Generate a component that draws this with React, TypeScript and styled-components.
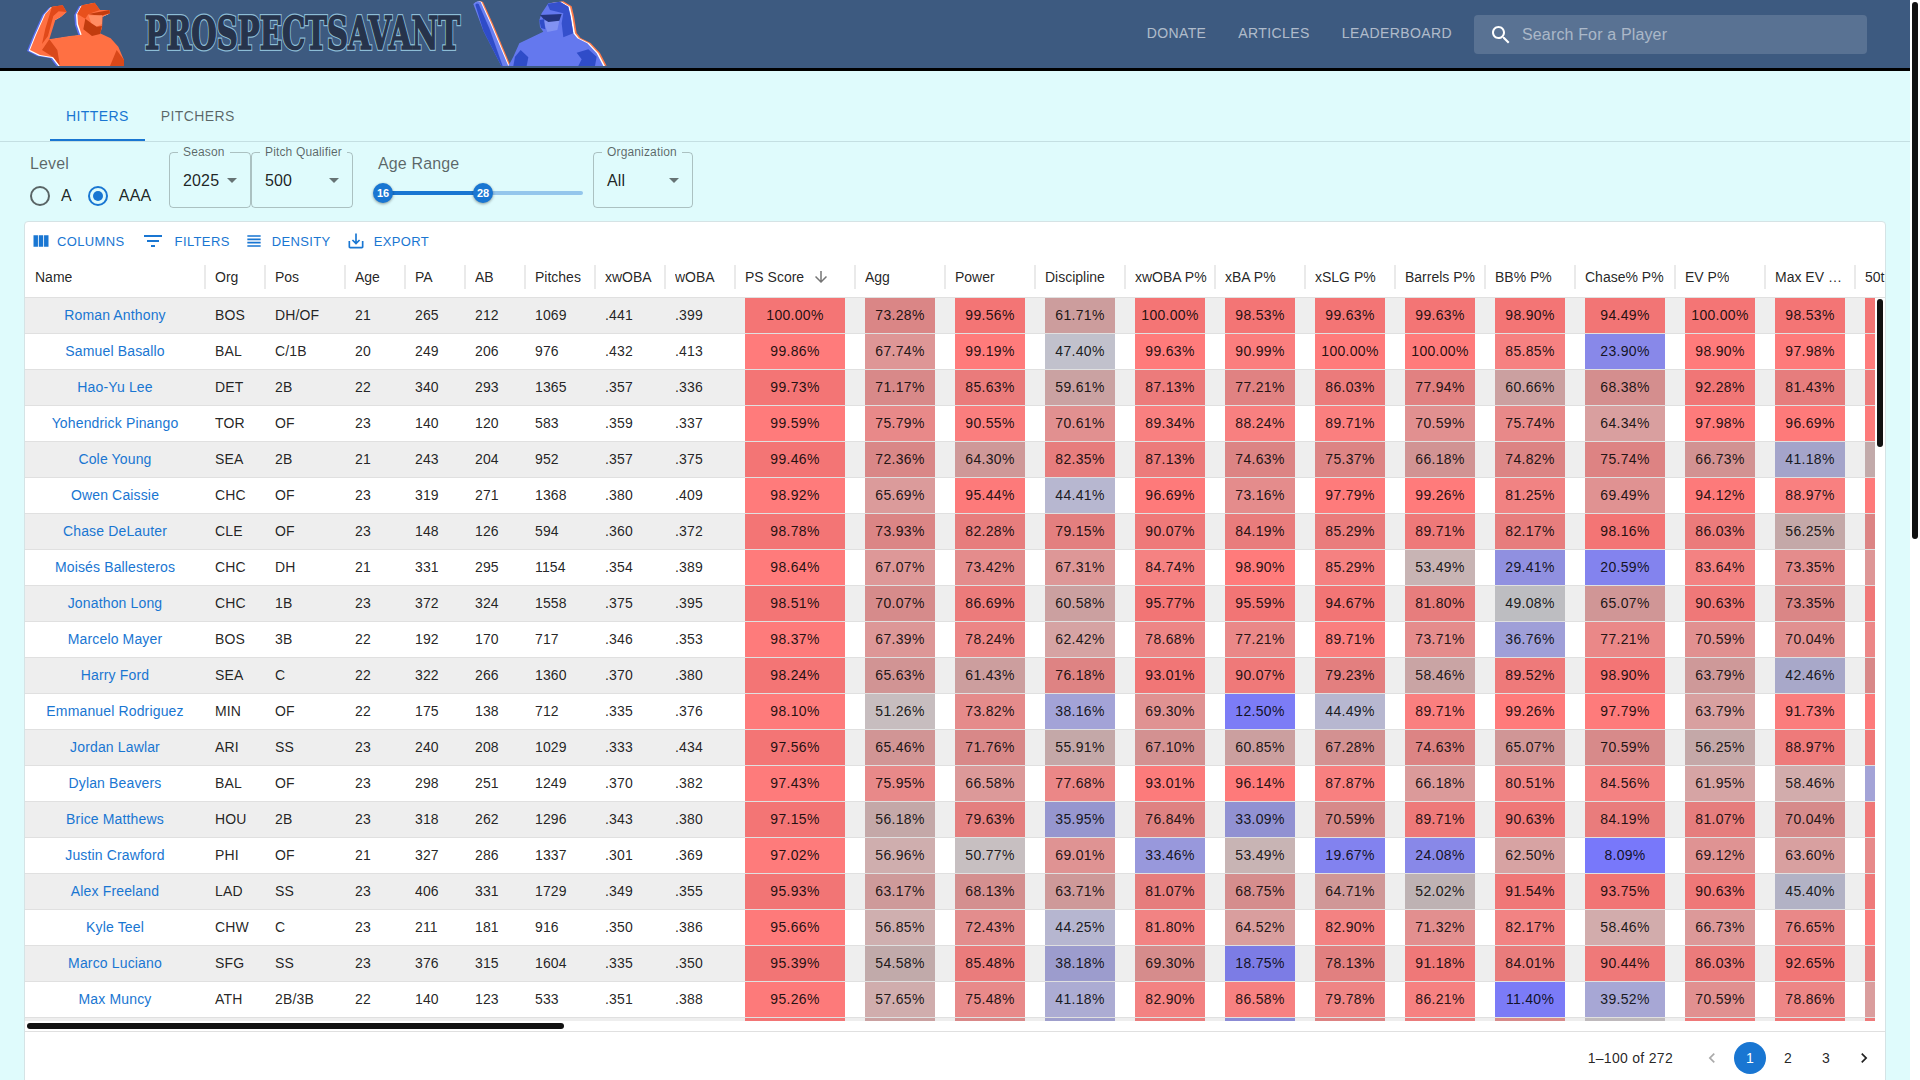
import React from 'react'
import styled, { createGlobalStyle } from 'styled-components'

const GlobalStyle = createGlobalStyle`
  body {
    margin: 0;
    background: #dffbfc;
    font-family: "Liberation Sans", Arial, sans-serif;
    color: rgba(0, 0, 0, 0.87);
  }
`

const Shell = styled.div`
  display: flex;
  height: 100vh;
  overflow: hidden;
`

const Main = styled.main`
  flex: 1;
  min-width: 0;
`

const PageScrollTrack = styled.aside`
  flex: none;
  width: 10px;
  background: #fff;
`

const ScrollThumb = styled.div<{ $w: number; $h: number }>`
  width: ${(p) => p.$w}px;
  height: ${(p) => p.$h}px;
  margin: 2px;
  background: #111;
  border-radius: 3px;
`

const TopBar = styled.header`
  height: 68px;
  background: #3d5a80;
  border-bottom: 3px solid #000;
  display: flex;
  justify-content: space-between;
  padding: 0 43px 0 20px;
`

const Logo = styled.svg`
  width: 600px;
  height: 66px;
  flex: none;
`

const LogoText = styled.text<{ $halo?: boolean }>`
  font-family: "DejaVu Serif", serif;
  font-weight: 700;
  font-size: 45px;
  fill: #26334b;
  stroke: ${(p) => (p.$halo ? '#8dbdd6' : '#26334b')};
  stroke-width: ${(p) => (p.$halo ? 4 : 1.6)}px;
  stroke-linejoin: miter;
`

const Nav = styled.nav`
  display: flex;
  align-items: center;
`

const NavLink = styled.a`
  font-size: 14px;
  letter-spacing: 0.4px;
  text-transform: uppercase;
  color: rgba(255, 255, 255, 0.6);
  margin-right: 32px;
  padding-bottom: 2px;

  &:last-of-type {
    margin-right: 22px;
  }
`

const Search = styled.div`
  width: 393px;
  height: 39px;
  margin-top: 1px;
  border-radius: 4px;
  background: rgba(255, 255, 255, 0.15);
  display: flex;
  align-items: center;
  padding-left: 15px;
  box-sizing: border-box;
  gap: 7px;
  color: #fff;
`

const SearchInput = styled.input`
  flex: 1;
  border: 0;
  outline: 0;
  background: none;
  font: 16px "Liberation Sans", Arial, sans-serif;
  letter-spacing: 0.15px;
  color: #fff;

  &::placeholder {
    color: rgba(255, 255, 255, 0.5);
    opacity: 1;
  }
`

const Tabs = styled.div`
  margin-top: 22px;
  height: 48px;
  padding-left: 50px;
  display: flex;
  border-bottom: 1px solid #c4dfe2;
`

const Tab = styled.div<{ $active?: boolean }>`
  padding: 0 16px 2px;
  display: flex;
  align-items: center;
  font-size: 14px;
  letter-spacing: 0.4px;
  text-transform: uppercase;
  color: ${(p) => (p.$active ? '#1976d2' : 'rgba(0, 0, 0, 0.6)')};
  box-shadow: ${(p) => (p.$active ? 'inset 0 -2px 0 #1976d2' : 'none')};
`

const FilterBar = styled.div`
  display: flex;
  padding: 10px 0 0 30px;
  height: 56px;
  margin-bottom: 13px;
`

const FilterGroup = styled.div<{ $w: number }>`
  width: ${(p) => p.$w}px;
  flex: none;
`

const FilterLabel = styled.div`
  font-size: 16px;
  line-height: 24px;
  letter-spacing: 0.15px;
  color: rgba(0, 0, 0, 0.6);
`

const RadioRow = styled.div`
  display: flex;
  align-items: center;
  margin-top: 10px;
  font-size: 16px;
  letter-spacing: 0.15px;
`

const RadioRing = styled.span<{ $on?: boolean }>`
  width: 20px;
  height: 20px;
  box-sizing: border-box;
  border-radius: 50%;
  border: 2px solid ${(p) => (p.$on ? '#1976d2' : 'rgba(0, 0, 0, 0.6)')};
  display: flex;
  align-items: center;
  justify-content: center;
  margin-right: 11px;

  &::after {
    content: '';
    width: 10px;
    height: 10px;
    border-radius: 50%;
    background: ${(p) => (p.$on ? '#1976d2' : 'transparent')};
  }
`

const RadioText = styled.span`
  margin-right: 16px;
`

const SelectBox = styled.div<{ $w: number }>`
  position: relative;
  width: ${(p) => p.$w}px;
  height: 56px;
  box-sizing: border-box;
  flex: none;
  border: 1px solid rgba(0, 0, 0, 0.23);
  border-radius: 4px;
  padding: 2px 0 0 13px;
  display: flex;
  align-items: center;
  font-size: 16px;
  letter-spacing: 0.15px;
`

const SelectLegend = styled.span`
  position: absolute;
  top: -8px;
  left: 8px;
  padding: 0 5px;
  background: #dffbfc;
  font-size: 12px;
  line-height: 14px;
  letter-spacing: 0.15px;
  color: rgba(0, 0, 0, 0.6);
`

const SelectArrow = styled.svg`
  position: absolute;
  right: 6px;
  top: 15px;
  width: 24px;
  height: 24px;
  fill: rgba(0, 0, 0, 0.54);
`

const AgeGroup = styled.div`
  width: 215px;
  flex: none;
  margin-left: 25px;
`

const Slider = styled.div`
  position: relative;
  width: 200px;
  height: 4px;
  margin: 15px 0 0 5px;
  border-radius: 2px;
  background: #94c6ec;
`

const SliderTrack = styled.div<{ $w: number }>`
  height: 100%;
  width: ${(p) => p.$w}px;
  background: #1976d2;
  border-radius: 2px;
`

const SliderThumb = styled.span<{ $x: number }>`
  position: absolute;
  left: ${(p) => p.$x - 10}px;
  top: -8px;
  width: 20px;
  height: 20px;
  border-radius: 50%;
  background: #1976d2;
  color: #fff;
  font-size: 11px;
  font-weight: 700;
  display: flex;
  align-items: center;
  justify-content: center;
  box-shadow: 0 1px 3px rgba(0, 0, 0, 0.4);
`

const Grid = styled.section`
  margin-left: 24px;
  width: 1862px;
  box-sizing: border-box;
  background: #fff;
  border: 1px solid #d5e3e5;
  border-radius: 4px;
`

const Toolbar = styled.div`
  height: 40px;
  box-sizing: border-box;
  padding: 0 0 2px 6px;
  display: flex;
  align-items: center;
  gap: 14px;
`

const ToolButton = styled.button<{ $gap: number; $lead: number }>`
  border: 0;
  padding: 0;
  margin-left: ${(p) => p.$lead}px;
  background: none;
  display: flex;
  align-items: center;
  gap: ${(p) => p.$gap}px;
  font: 13px "Liberation Sans", Arial, sans-serif;
  letter-spacing: 0.37px;
  text-transform: uppercase;
  color: #1976d2;
`

const ToolIcon = styled.svg<{ $size: number }>`
  width: ${(p) => p.$size}px;
  height: ${(p) => p.$size}px;
  fill: #1976d2;
`

const HeaderRow = styled.div`
  height: 35px;
  display: flex;
  overflow: hidden;
  border-bottom: 1px solid #e0e0e0;
`

const HeaderCell = styled.div<{ $w: number }>`
  position: relative;
  flex: none;
  width: ${(p) => p.$w}px;
  box-sizing: border-box;
  padding: 0 6px 6px 10px;
  display: flex;
  align-items: center;
  font-size: 14px;

  &::after {
    content: '';
    position: absolute;
    right: -1px;
    top: 3px;
    bottom: 8px;
    width: 2px;
    background: #eaeaea;
  }
`

const HeaderTitle = styled.span`
  overflow: hidden;
  white-space: nowrap;
  text-overflow: ellipsis;
`

const SortIcon = styled.svg`
  width: 18px;
  height: 18px;
  margin-left: 8px;
  flex: none;
  fill: rgba(0, 0, 0, 0.54);
`

const BodyArea = styled.div`
  display: flex;
  height: 723px;
`

const RowViewport = styled.div`
  width: 1850px;
  flex: none;
  overflow: hidden;
`

const VerticalTrack = styled.div`
  flex: 1;
  margin-top: -1px;
`

const HorizontalTrack = styled.div`
  display: flex;
  height: 10px;
`

const Row = styled.div<{ $striped: boolean }>`
  height: 36px;
  box-sizing: border-box;
  display: flex;
  background: ${(p) => (p.$striped ? '#eeeeee' : '#ffffff')};
  border-bottom: 1px solid #e0e0e0;
`

const Cell = styled.div<{ $w: number }>`
  flex: none;
  width: ${(p) => p.$w}px;
  box-sizing: border-box;
  padding: 0 10px;
  display: flex;
  align-items: center;
  font-size: 14px;
  letter-spacing: 0.15px;
`

const TextCell = styled(Cell)`
  padding-bottom: 1px;
`

const NameCell = styled(TextCell)`
  justify-content: center;
  color: #1976d2;
`

const Fill = styled.div`
  width: 100%;
  height: 100%;
  box-sizing: border-box;
  padding-bottom: 1px;
  display: flex;
  align-items: center;
  justify-content: center;
  letter-spacing: 0.3px;
`

const Footer = styled.div`
  height: 52px;
  border-top: 1px solid #e0e0e0;
  display: flex;
  align-items: center;
  justify-content: flex-end;
  padding-right: 5px;
  font-size: 14px;
  letter-spacing: 0.15px;
`

const PageCount = styled.span`
  margin-right: 17px;
  letter-spacing: 0.3px;
`

const PageButton = styled.span<{ $active?: boolean; $disabled?: boolean }>`
  width: 32px;
  height: 32px;
  margin-left: 6px;
  border-radius: 50%;
  display: flex;
  align-items: center;
  justify-content: center;
  background: ${(p) => (p.$active ? '#1976d2' : 'transparent')};
  color: ${(p) => (p.$active ? '#fff' : 'rgba(0, 0, 0, 0.87)')};
  opacity: ${(p) => (p.$disabled ? 0.38 : 1)};
`

const PageIcon = styled.svg`
  width: 20px;
  height: 20px;
  fill: currentColor;
`

const ICONS = {
  columns: 'M14.67 5v14H9.33V5h5.34zm1 14H21V5h-5.33v14zm-7.34 0V5H3v14h5.33z',
  filter: 'M10 18h4v-2h-4v2zM3 6v2h18V6H3zm3 7h12v-2H6v2z',
  density: 'M4 15h16v-2H4v2zm0 4h16v-2H4v2zm0-8h16V9H4v2zm0-6v2h16V5H4z',
  save: 'M19 12v7H5v-7H3v7c0 1.1.9 2 2 2h14c1.1 0 2-.9 2-2v-7h-2zm-6 .67l2.59-2.58L17 11.5l-5 5-5-5 1.41-1.41L11 12.67V3h2z',
  search:
    'M15.5 14h-.79l-.28-.27C15.41 12.59 16 11.11 16 9.5 16 5.91 13.09 3 9.5 3S3 5.91 3 9.5 5.91 16 9.5 16c1.61 0 3.09-.59 4.23-1.57l.27.28v.79l5 4.99L20.49 19l-4.99-5zm-6 0C7.01 14 5 11.99 5 9.5S7.01 5 9.5 5 14 7.01 14 9.5 11.99 14 9.5 14z',
  down: 'M20 12l-1.41-1.41L13 16.17V4h-2v12.17l-5.58-5.59L4 12l8 8 8-8z',
  drop: 'M7 10l5 5 5-5z',
  prev: 'M15.41 7.41 14 6l-6 6 6 6 1.41-1.41L10.83 12z',
  next: 'M10 6 8.59 7.41 13.17 12l-4.58 4.59L10 18l6-6z',
}

const INFO_COLUMNS: [string, number][] = [
  ['Name', 180],
  ['Org', 60],
  ['Pos', 80],
  ['Age', 60],
  ['PA', 60],
  ['AB', 60],
  ['Pitches', 70],
  ['xwOBA', 70],
  ['wOBA', 70],
]

const PCT_COLUMNS: [string, number][] = [
  ['PS Score', 120],
  ['Agg', 90],
  ['Power', 90],
  ['Discipline', 90],
  ['xwOBA P%', 90],
  ['xBA P%', 90],
  ['xSLG P%', 90],
  ['Barrels P%', 90],
  ['BB% P%', 90],
  ['Chase% P%', 100],
  ['EV P%', 90],
  ['Max EV P%', 90],
  ['50th EV P%', 110],
]

const ROWS: (string | number)[][] = [
  ['Roman Anthony', 'BOS', 'DH/OF', 21, 265, 212, 1069, '.441', '.399', 100.0, 73.28, 99.56, 61.71, 100.0, 98.53, 99.63, 99.63, 98.9, 94.49, 100.0, 98.53, 98],
  ['Samuel Basallo', 'BAL', 'C/1B', 20, 249, 206, 976, '.432', '.413', 99.86, 67.74, 99.19, 47.4, 99.63, 90.99, 100.0, 100.0, 85.85, 23.9, 98.9, 97.98, 97],
  ['Hao-Yu Lee', 'DET', '2B', 22, 340, 293, 1365, '.357', '.336', 99.73, 71.17, 85.63, 59.61, 87.13, 77.21, 86.03, 77.94, 60.66, 68.38, 92.28, 81.43, 88],
  ['Yohendrick Pinango', 'TOR', 'OF', 23, 140, 120, 583, '.359', '.337', 99.59, 75.79, 90.55, 70.61, 89.34, 88.24, 89.71, 70.59, 75.74, 64.34, 97.98, 96.69, 95],
  ['Cole Young', 'SEA', '2B', 21, 243, 204, 952, '.357', '.375', 99.46, 72.36, 64.3, 82.35, 87.13, 74.63, 75.37, 66.18, 74.82, 75.74, 66.73, 41.18, 55],
  ['Owen Caissie', 'CHC', 'OF', 23, 319, 271, 1368, '.380', '.409', 98.92, 65.69, 95.44, 44.41, 96.69, 73.16, 97.79, 99.26, 81.25, 69.49, 94.12, 88.97, 96],
  ['Chase DeLauter', 'CLE', 'OF', 23, 148, 126, 594, '.360', '.372', 98.78, 73.93, 82.28, 79.15, 90.07, 84.19, 85.29, 89.71, 82.17, 98.16, 86.03, 56.25, 75],
  ['Moisés Ballesteros', 'CHC', 'DH', 21, 331, 295, 1154, '.354', '.389', 98.64, 67.07, 73.42, 67.31, 84.74, 98.9, 85.29, 53.49, 29.41, 20.59, 83.64, 73.35, 68],
  ['Jonathon Long', 'CHC', '1B', 23, 372, 324, 1558, '.375', '.395', 98.51, 70.07, 86.69, 60.58, 95.77, 95.59, 94.67, 81.8, 49.08, 65.07, 90.63, 73.35, 92],
  ['Marcelo Mayer', 'BOS', '3B', 22, 192, 170, 717, '.346', '.353', 98.37, 67.39, 78.24, 62.42, 78.68, 77.21, 89.71, 73.71, 36.76, 77.21, 70.59, 70.04, 78],
  ['Harry Ford', 'SEA', 'C', 22, 322, 266, 1360, '.370', '.380', 98.24, 65.63, 61.43, 76.18, 93.01, 90.07, 79.23, 58.46, 89.52, 98.9, 63.79, 42.46, 72],
  ['Emmanuel Rodriguez', 'MIN', 'OF', 22, 175, 138, 712, '.335', '.376', 98.1, 51.26, 73.82, 38.16, 69.3, 12.5, 44.49, 89.71, 99.26, 97.79, 63.79, 91.73, 95],
  ['Jordan Lawlar', 'ARI', 'SS', 23, 240, 208, 1029, '.333', '.434', 97.56, 65.46, 71.76, 55.91, 67.1, 60.85, 67.28, 74.63, 65.07, 70.59, 56.25, 88.97, 92],
  ['Dylan Beavers', 'BAL', 'OF', 23, 298, 251, 1249, '.370', '.382', 97.43, 75.95, 66.58, 77.68, 93.01, 96.14, 87.87, 66.18, 80.51, 84.56, 61.95, 58.46, 38],
  ['Brice Matthews', 'HOU', '2B', 23, 318, 262, 1296, '.343', '.380', 97.15, 56.18, 79.63, 35.95, 76.84, 33.09, 70.59, 89.71, 90.63, 84.19, 81.07, 70.04, 92],
  ['Justin Crawford', 'PHI', 'OF', 21, 327, 286, 1337, '.301', '.369', 97.02, 56.96, 50.77, 69.01, 33.46, 53.49, 19.67, 24.08, 62.5, 8.09, 69.12, 63.6, 75],
  ['Alex Freeland', 'LAD', 'SS', 23, 406, 331, 1729, '.349', '.355', 95.93, 63.17, 68.13, 63.71, 81.07, 68.75, 64.71, 52.02, 91.54, 93.75, 90.63, 45.4, 90],
  ['Kyle Teel', 'CHW', 'C', 23, 211, 181, 916, '.350', '.386', 95.66, 56.85, 72.43, 44.25, 81.8, 64.52, 82.9, 71.32, 82.17, 58.46, 66.73, 76.65, 92],
  ['Marco Luciano', 'SFG', 'SS', 23, 376, 315, 1604, '.335', '.350', 95.39, 54.58, 85.48, 38.18, 69.3, 18.75, 78.13, 91.18, 84.01, 90.44, 86.03, 92.65, 85],
  ['Max Muncy', 'ATH', '2B/3B', 22, 140, 123, 533, '.351', '.388', 95.26, 57.65, 75.48, 41.18, 82.9, 86.58, 79.78, 86.21, 11.4, 39.52, 70.59, 78.86, 65],
  ['', '', '', '', '', '', '', '', '', 95.12, 60.2, 72.1, 39.3, 85.2, 30.4, 75.5, 85.1, 70.3, 50.0, 90.2, 92.1, 90],
]

// percentile -> [r, g, b], blue at the bottom of the scale and red at the top
const SCALE: [number, number, number, number][] = [
  [8, 120, 120, 250],
  [20.59, 131, 131, 238],
  [29.41, 144, 144, 224],
  [36.76, 159, 159, 216],
  [42.46, 176, 176, 210],
  [49, 198, 198, 202],
  [53.49, 200, 180, 180],
  [58.46, 210, 172, 172],
  [63.79, 216, 160, 160],
  [69.49, 224, 146, 146],
  [73.35, 228, 140, 140],
  [81.25, 241, 131, 131],
  [88.97, 249, 128, 128],
  [94, 253, 122, 122],
  [100, 255, 123, 123],
]

function pctColor(pct: number, striped: boolean) {
  let i = 0
  while (i < SCALE.length - 2 && pct > SCALE[i + 1][0]) i++
  const a = SCALE[i]
  const b = SCALE[i + 1]
  const t = Math.min(1, Math.max(0, (pct - a[0]) / (b[0] - a[0])))
  const shade = striped ? 0.955 : 1
  const ch = (n: number) => Math.round((a[n] + (b[n] - a[n]) * t) * shade)
  return `rgb(${ch(1)}, ${ch(2)}, ${ch(3)})`
}

function Pitcher() {
  const body =
    'M30 150 L48 105 L76 42 L96 20 L128 16 L140 36 L124 50 L106 60 L88 118 L150 108 L185 104 L174 72 L172 42 L186 16 L224 8 L240 30 L268 30 L270 40 L248 50 L246 85 L240 100 L272 115 L295 140 L312 180 L312 198 L120 198 L100 172 L60 165 Z'
  return (
    <g transform="scale(0.3333)">
      <path d={body} fill="#5a6ff0" transform="translate(-9 3)" />
      <path d={body} fill="#ffffff" transform="translate(-4 2)" />
      <path d={body} fill="#ff7043" />
      <path d="M172 42 L186 16 L224 8 L240 30 L205 42 L196 56 Z" fill="#e8501c" />
      <path d="M205 42 L268 30 L270 40 L240 48 Z" fill="#c23c0e" />
      <path d="M205 46 L246 46 L246 72 L230 80 L214 70 Z" fill="#ff8d63" />
      <path d="M196 56 L214 70 L230 80 L246 78 L240 102 L216 108 L190 88 Z" fill="#c23c0e" />
      <path d="M96 20 L128 16 L140 36 L116 34 L100 48 L84 108 L66 132 L76 86 Z" fill="#e0491a" />
      <path d="M88 118 L112 150 L120 198 L100 172 L66 150 Z" fill="#d9481a" />
      <path d="M270 198 L290 150 L312 180 L312 198 Z" fill="#d9481a" />
    </g>
  )
}

function Batter() {
  const bat = 'M40 12 Q50 0 62 6 L92 72 L145 198 L124 198 L70 92 Z'
  const body =
    'M178 130 L250 95 L240 82 L238 60 L245 40 L265 10 L300 5 L325 20 L332 50 L340 100 L352 115 L382 130 L410 160 L430 198 L145 198 L160 170 Z'
  return (
    <g transform="translate(440 0) scale(0.3333)">
      <path d={bat} fill="#ff7a4a" transform="translate(7 0)" />
      <path d={bat} fill="#ffffff" transform="translate(3 0)" />
      <path d={bat} fill="#6a7ff0" />
      <path d="M46 14 Q50 8 56 12 L88 85 L128 198 L124 198 L70 92 Z" fill="#2f4cc8" />
      <path d={body} fill="#ff7a4a" transform="translate(10 -1)" />
      <path d={body} fill="#ffffff" transform="translate(5 0)" />
      <path d={body} fill="#6478ee" />
      <path d="M262 12 L300 5 L325 20 L332 50 L340 100 L310 112 L305 70 L310 40 L270 30 Z" fill="#3550cc" />
      <path d="M250 62 L298 62 L292 90 L262 96 Z" fill="#8192f3" />
      <path d="M240 45 L305 42 L298 62 L265 66 L250 56 Z" fill="#24357f" />
      <path d="M238 60 L252 58 L256 88 L243 84 Z" fill="#2f4cc8" />
      <path d="M165 170 L182 150 L205 172 L200 198 L160 198 Z" fill="#2f4cc8" />
      <path d="M350 158 L385 148 L410 170 L405 198 L355 198 L365 178 Z" fill="#2f4cc8" />
    </g>
  )
}

function Select({ label, value, width }: { label: string; value: string; width: number }) {
  return (
    <SelectBox $w={width}>
      <SelectLegend>{label}</SelectLegend>
      {value}
      <SelectArrow viewBox="0 0 24 24">
        <path d={ICONS.drop} />
      </SelectArrow>
    </SelectBox>
  )
}

function ToolbarItem(props: { path: string; size: number; label: string; gap: number; lead: number }) {
  return (
    <ToolButton $gap={props.gap} $lead={props.lead}>
      <ToolIcon $size={props.size} viewBox="0 0 24 24">
        <path d={props.path} />
      </ToolIcon>
      {props.label}
    </ToolButton>
  )
}

export default function App() {
  return (
    <Shell>
      <GlobalStyle />
      <Main>
        <TopBar>
          <Logo viewBox="0 0 600 66">
            <Pitcher />
            <LogoText $halo x="125" y="49" textLength="315" lengthAdjust="spacingAndGlyphs" aria-hidden="true">
              PROSPECTSAVANT
            </LogoText>
            <LogoText x="125" y="49" textLength="315" lengthAdjust="spacingAndGlyphs">
              PROSPECTSAVANT
            </LogoText>
            <Batter />
          </Logo>
          <Nav>
            <NavLink>Donate</NavLink>
            <NavLink>Articles</NavLink>
            <NavLink>Leaderboard</NavLink>
            <Search>
              <svg width="24" height="24" viewBox="0 0 24 24" fill="#fff">
                <path d={ICONS.search} />
              </svg>
              <SearchInput placeholder="Search For a Player" />
            </Search>
          </Nav>
        </TopBar>

        <Tabs>
          <Tab $active>Hitters</Tab>
          <Tab>Pitchers</Tab>
        </Tabs>

        <FilterBar>
          <FilterGroup $w={139}>
            <FilterLabel>Level</FilterLabel>
            <RadioRow>
              <RadioRing />
              <RadioText>A</RadioText>
              <RadioRing $on />
              <RadioText>AAA</RadioText>
            </RadioRow>
          </FilterGroup>
          <Select label="Season" value="2025" width={82} />
          <Select label="Pitch Qualifier" value="500" width={102} />
          <AgeGroup>
            <FilterLabel>Age Range</FilterLabel>
            <Slider>
              <SliderTrack $w={100} />
              <SliderThumb $x={0}>16</SliderThumb>
              <SliderThumb $x={100}>28</SliderThumb>
            </Slider>
          </AgeGroup>
          <Select label="Organization" value="All" width={100} />
        </FilterBar>

        <Grid>
          <Toolbar>
            <ToolbarItem path={ICONS.columns} size={20} label="Columns" gap={6} lead={0} />
            <ToolbarItem path={ICONS.filter} size={24} label="Filters" gap={10} lead={2} />
            <ToolbarItem path={ICONS.density} size={20} label="Density" gap={8} lead={0} />
            <ToolbarItem path={ICONS.save} size={20} label="Export" gap={8} lead={1} />
          </Toolbar>
          <HeaderRow>
            {[...INFO_COLUMNS, ...PCT_COLUMNS].map(([title, width]) => (
              <HeaderCell key={title} $w={width}>
                <HeaderTitle>{title}</HeaderTitle>
                {title === 'PS Score' && (
                  <SortIcon viewBox="0 0 24 24">
                    <path d={ICONS.down} />
                  </SortIcon>
                )}
              </HeaderCell>
            ))}
          </HeaderRow>
          <BodyArea>
            <RowViewport>
              {ROWS.map((row, r) => {
                const striped = r % 2 === 0
                return (
                  <Row key={r} $striped={striped}>
                    <NameCell $w={INFO_COLUMNS[0][1]}>{row[0]}</NameCell>
                    {INFO_COLUMNS.slice(1).map(([title, width], c) => (
                      <TextCell key={title} $w={width}>
                        {row[c + 1]}
                      </TextCell>
                    ))}
                    {PCT_COLUMNS.map(([title, width], c) => {
                      const pct = row[c + INFO_COLUMNS.length] as number
                      return (
                        <Cell key={title} $w={width}>
                          <Fill style={{ background: pctColor(pct, striped) }}>{pct.toFixed(2)}%</Fill>
                        </Cell>
                      )
                    })}
                  </Row>
                )
              })}
            </RowViewport>
            <VerticalTrack>
              <ScrollThumb $w={6} $h={148} />
            </VerticalTrack>
          </BodyArea>
          <HorizontalTrack>
            <ScrollThumb $w={537} $h={6} />
          </HorizontalTrack>
          <Footer>
            <PageCount>1–100 of 272</PageCount>
            <PageButton $disabled>
              <PageIcon viewBox="0 0 24 24">
                <path d={ICONS.prev} />
              </PageIcon>
            </PageButton>
            <PageButton $active>1</PageButton>
            <PageButton>2</PageButton>
            <PageButton>3</PageButton>
            <PageButton>
              <PageIcon viewBox="0 0 24 24">
                <path d={ICONS.next} />
              </PageIcon>
            </PageButton>
          </Footer>
        </Grid>
      </Main>
      <PageScrollTrack>
        <ScrollThumb $w={6} $h={537} />
      </PageScrollTrack>
    </Shell>
  )
}
